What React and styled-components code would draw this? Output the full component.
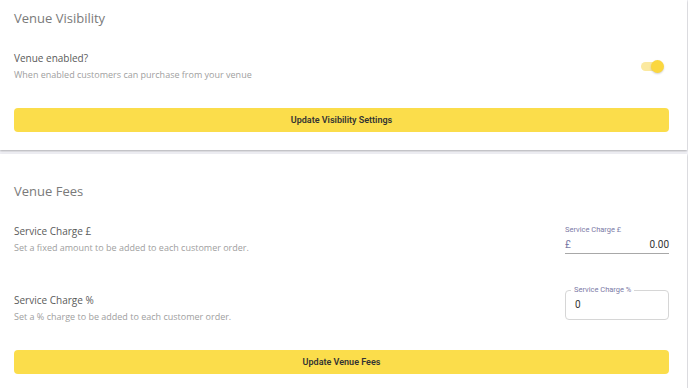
import React from 'react';
import styled, { createGlobalStyle } from 'styled-components';

const GlobalStyle = createGlobalStyle`
  body {
    margin: 0;
    background: #f1f1f6;
    font-family: "Open Sans", "Liberation Sans", sans-serif;
  }
`;

const Page = styled.div`
  display: flex;
  flex-direction: column;
  gap: 4px;
  width: 687px;
`;

const Card = styled.section`
  background: #fff;
  padding: ${(p) => p.padding};
  box-shadow: 0 1px 2px rgba(0, 0, 0, 0.28);
`;

const Heading = styled.h2`
  margin: 0;
  font-size: 13px;
  line-height: 22px;
  font-weight: 400;
  color: #7a7a7a;
`;

const Row = styled.div`
  display: flex;
  justify-content: space-between;
  align-items: center;
  margin-top: ${(p) => p.top}px;
`;

const TextBlock = styled.div`
  display: flex;
  flex-direction: column;
`;

const Title = styled.div`
  font-size: 10px;
  line-height: 16px;
  color: #5a5a5a;
`;

const Sub = styled.div`
  font-size: 9px;
  line-height: 17px;
  color: #a0a0a0;
`;

const Button = styled.button`
  display: block;
  width: 100%;
  height: 24px;
  margin-top: ${(p) => p.top}px;
  border: none;
  border-radius: 4px;
  background: #fbdd4b;
  color: #333;
  font-family: Roboto, "Liberation Sans", sans-serif;
  font-size: 9px;
  font-weight: 600;
  cursor: pointer;
`;

const Toggle = styled.div`
  position: relative;
  width: 22px;
  height: 9px;
  margin-right: 6px;
  border-radius: 5px;
  background: #fbe9a0;
`;

const Knob = styled.span`
  position: absolute;
  right: -1px;
  top: 50%;
  width: 13px;
  height: 13px;
  margin-top: -6.5px;
  border-radius: 50%;
  background: #fbd73f;
  box-shadow: 0 1px 2px rgba(0, 0, 0, 0.18);
`;

const Field = styled.div`
  width: 104px;
  font-family: Roboto, "Liberation Sans", sans-serif;
`;

const FieldLabel = styled.div`
  font-size: 7.5px;
  line-height: 10px;
  color: #7b7aa6;
`;

const UnderlineInput = styled.div`
  display: flex;
  justify-content: space-between;
  margin-top: 2px;
  height: 16px;
  line-height: 16px;
  border-bottom: 1px solid #a8a8a8;
  font-size: 10px;
  color: #333;
`;

const Prefix = styled.span`
  color: #7b7aa6;
`;

const Outlined = styled.fieldset`
  margin: 0;
  padding: 0 9px;
  height: 34px;
  box-sizing: border-box;
  border: 1px solid #d6d6d6;
  border-radius: 4px;
  display: flex;
  align-items: center;
  font-size: 10px;
  color: #333;
  position: relative;
  top: -5px;

  legend {
    padding: 0 3px;
    margin-left: -4px;
    font-size: 7.5px;
    line-height: 8px;
    color: #7b7aa6;
  }
`;

const OutlinedValue = styled.span`
  margin-top: -4px;
`;

export default function App() {
  return (
    <>
      <GlobalStyle />
      <Page>
        <Card padding="7px 18px 18px 14px">
          <Heading>Venue Visibility</Heading>
          <Row top={21}>
            <TextBlock>
              <Title>Venue enabled?</Title>
              <Sub>When enabled customers can purchase from your venue</Sub>
            </TextBlock>
            <Toggle>
              <Knob />
            </Toggle>
          </Row>
          <Button top={25}>Update Visibility Settings</Button>
        </Card>
        <Card padding="26px 18px 20px 14px">
          <Heading>Venue Fees</Heading>
          <Row top={21}>
            <TextBlock>
              <Title>Service Charge £</Title>
              <Sub>Set a fixed amount to be added to each customer order.</Sub>
            </TextBlock>
            <Field>
              <FieldLabel>Service Charge £</FieldLabel>
              <UnderlineInput>
                <Prefix>£</Prefix>
                <span>0.00</span>
              </UnderlineInput>
            </Field>
          </Row>
          <Row top={35}>
            <TextBlock>
              <Title>Service Charge %</Title>
              <Sub>Set a % charge to be added to each customer order.</Sub>
            </TextBlock>
            <Field>
              <Outlined>
                <legend>Service Charge %</legend>
                <OutlinedValue>0</OutlinedValue>
              </Outlined>
            </Field>
          </Row>
          <Button top={25}>Update Venue Fees</Button>
        </Card>
      </Page>
    </>
  );
}
